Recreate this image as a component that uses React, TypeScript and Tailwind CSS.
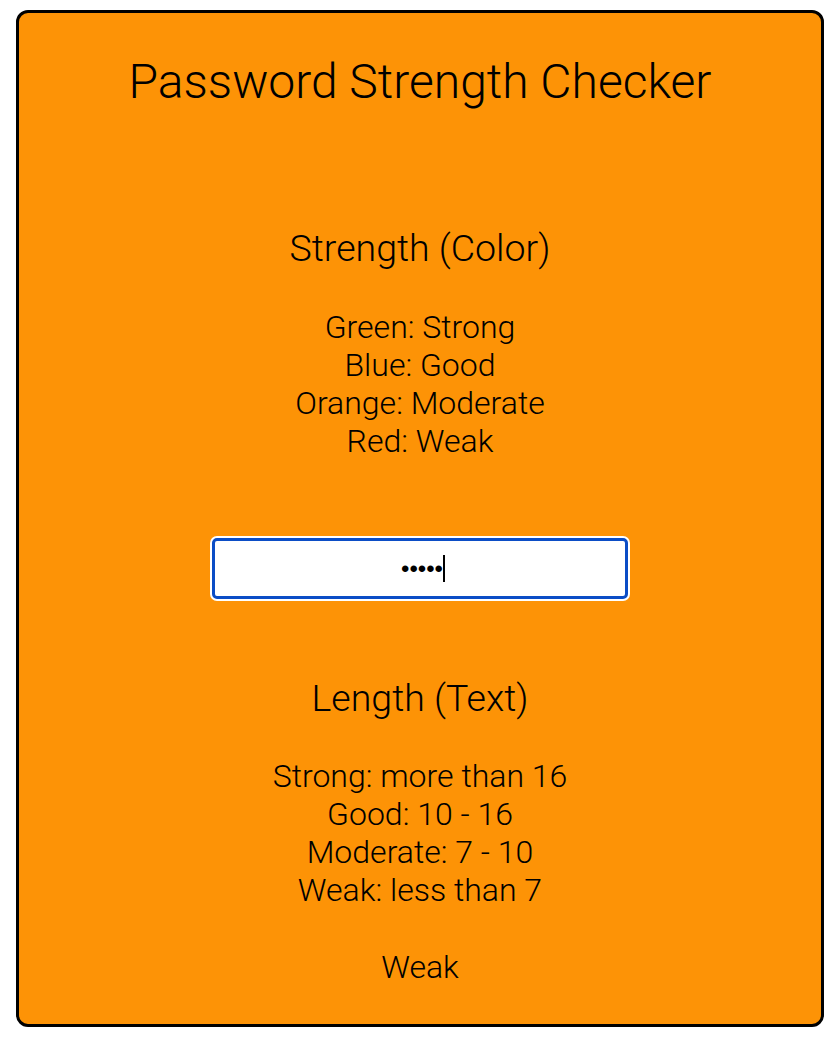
export default function App() {
  return (
    <div className="bg-white min-h-screen pt-[10px] px-[16px]" style={{ fontFamily: 'Roboto, "Liberation Sans", sans-serif' }}>
      <div className="h-[1017px] rounded-[12px] border-[3px] border-black bg-[#fd9306] text-black font-light text-center flex flex-col items-center">
        <h1 className="mt-[40px] text-[48px] leading-[58px] font-light">Password Strength Checker</h1>

        <h2 className="mt-[115px] text-[37.5px] leading-[44px] font-light">Strength (Color)</h2>
        <div className="mt-[38px] text-[32px] leading-[38px]">
          <p>Green: Strong</p>
          <p>Blue: Good</p>
          <p>Orange: Moderate</p>
          <p>Red: Weak</p>
        </div>

        {/* focused password field */}
        <div className="mt-[76px] rounded-[7px] bg-white p-[2px]">
          <div className="w-[416px] h-[61px] rounded-[5px] border-[3px] border-[#0b4dc6] bg-white flex items-center justify-center pl-[6px]">
            <span className="text-[24px] leading-none text-black font-normal" style={{ fontFamily: '"Liberation Sans", Arial, sans-serif' }}>
              •••••
            </span>
            <span className="w-[2px] h-[27px] bg-black ml-[0px]" />
          </div>
        </div>

        <h2 className="mt-[75px] text-[37.5px] leading-[44px] font-light">Length (Text)</h2>
        <div className="mt-[37px] text-[32px] leading-[38px]">
          <p>Strong: more than 16</p>
          <p>Good: 10 - 16</p>
          <p>Moderate: 7 - 10</p>
          <p>Weak: less than 7</p>
        </div>
        <p className="mt-[39px] text-[32px] leading-[38px]">Weak</p>
      </div>
    </div>
  );
}
